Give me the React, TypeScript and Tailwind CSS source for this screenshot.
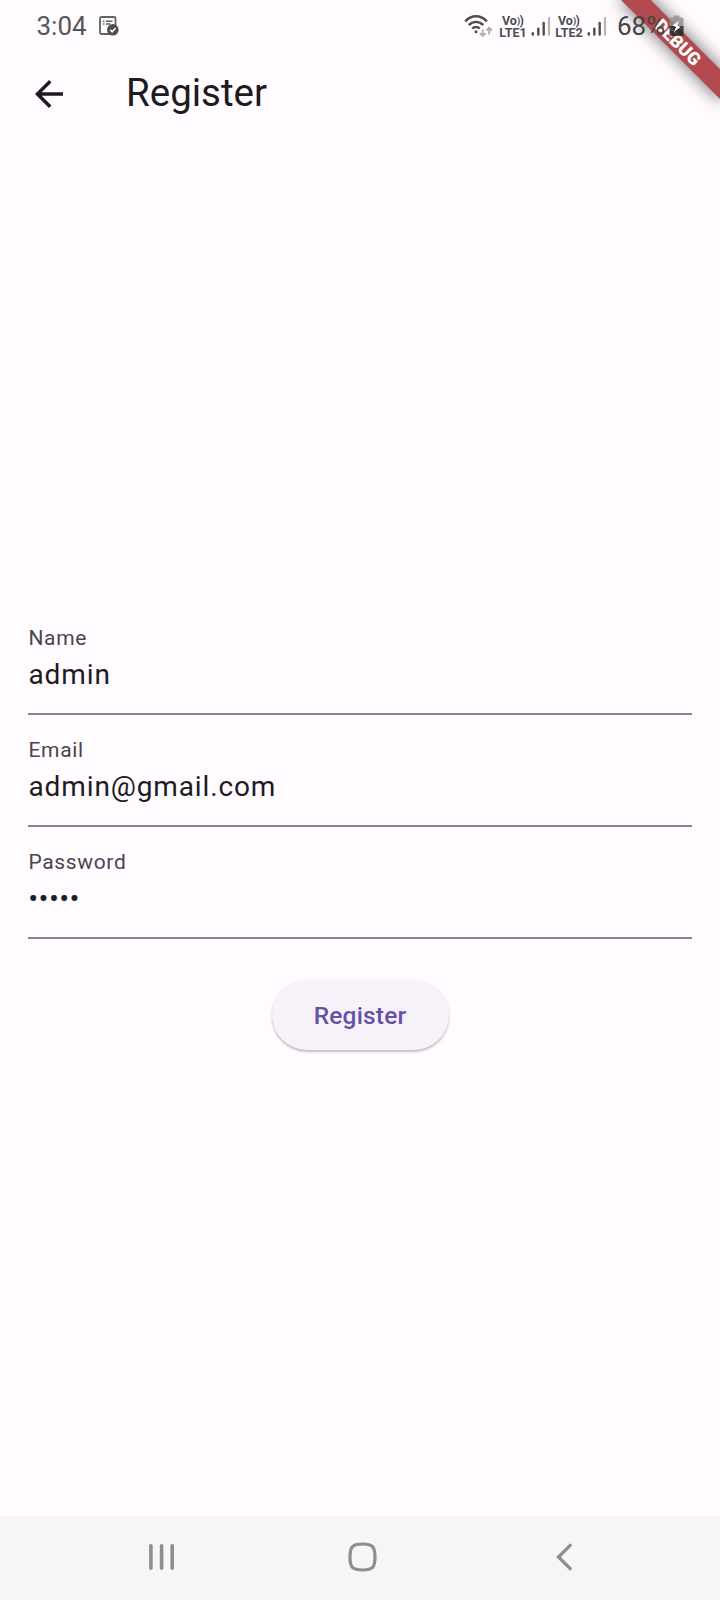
function Signal() {
  return (
    <svg width="20" height="22" viewBox="0 0 20 22" fill="none" strokeWidth="2.4" strokeLinecap="round">
      <path d="M1.8 18.2v1.4M7.3 13.6v6M12.7 8v11.6" stroke="#4d4d4f" />
      <path d="M18 3v16.6" stroke="#b9b7ba" />
    </svg>
  );
}

function Volte({ label }: { label: string }) {
  return (
    <div className="flex w-[28px] flex-col items-center text-[#4d4d4f]">
      <span className="flex h-[12px] items-center text-[12.5px] leading-[12px] font-bold">
        Vo<span className="text-[9px]">)</span><span className="-ml-[0.5px] text-[12.5px]">)</span>
      </span>
      <span className="flex h-[11px] items-center text-[12.5px] leading-[11px] font-bold">{label}</span>
    </div>
  );
}

function StatusBar() {
  return (
    <header className="relative z-20 flex h-[52px] items-center text-[26px] leading-[30px] text-[#565658]">
      <span className="ml-[36.5px] w-[51px]">3:04</span>
      <svg className="ml-[11.5px]" width="20" height="20" viewBox="0 0 20 20" fill="none">
        <rect x="1" y="1" width="15.5" height="17" rx="1.5" stroke="#626163" strokeWidth="1.8" />
        <path d="M4 5.2h1.5M7 5.2h6.5M4 8h1.5M7 8h4.5" stroke="#626163" strokeWidth="1.5" />
        <circle cx="13.8" cy="13.8" r="5.8" fill="#4d4d4f" />
        <path d="M11.2 13.8l1.9 2 3.5-3.7" stroke="#fff" strokeWidth="1.5" />
      </svg>
      <svg className="ml-[345px]" width="30" height="24" viewBox="0 0 30 24" fill="none">
        <g stroke="#4d4d4f" strokeWidth="2.4">
          <path d="M1.2 7.4C7.3.6 16.8.6 22.9 7.4" />
          <path d="M4.8 11.1c4.1-4.3 10.3-4.3 14.4 0" />
          <path d="M8.3 14.6c2.1-2.2 5.3-2.2 7.4 0" />
        </g>
        <circle cx="12" cy="17.8" r="1.5" fill="#4d4d4f" />
        <path d="M18.7 15.2v6.6M15.9 19.2l2.8 2.8 2.8-2.8M25.2 20.4v-6.6M22.4 16.6l2.8-2.8 2.8 2.8" stroke="#aaa8ac" strokeWidth="1.7" />
      </svg>
      <div className="ml-[5px]"><Volte label="LTE1" /></div>
      <div className="ml-[4px]"><Signal /></div>
      <div className="ml-[4px]"><Volte label="LTE2" /></div>
      <div className="ml-[4px]"><Signal /></div>
      <span className="ml-[10px] w-[49px] text-[#444446]">68%</span>
      <svg className="ml-[3px]" width="15" height="22" viewBox="0 0 15 22">
        <path d="M4.5.5h6v2h2.2Q14.5 2.5 14.5 4.5V11H.5V4.5q0-2 2-2h2z" fill="#8f8f8f" fillOpacity=".8" />
        <path d="M.5 11h14v8.5q0 1.5-1.5 1.5H2Q.5 21 .5 19.5z" fill="#222" fillOpacity=".82" />
        <path d="M10 6L3.5 10.5l3.6 1.6L5 17l6.5-5-3.4-1.4z" fill="#fff" />
      </svg>
    </header>
  );
}

function DebugBanner() {
  return (
    <div className="pointer-events-none absolute top-0 right-0 z-10 h-[140px] w-[140px] overflow-hidden">
      <div className="absolute top-[49px] left-[70px] flex h-[21px] w-[140px] origin-[70px_-49px] rotate-45 items-center justify-center bg-[#b24a4d] text-[17.85px] leading-none font-black text-white shadow-[0_0_18px_rgba(0,0,0,0.6)]">
        DEBUG
      </div>
    </div>
  );
}

function Field({ label, value, secret = false }: { label: string; value: string; secret?: boolean }) {
  return (
    <div className="flex h-[112px] flex-col border-b-2 border-[#8a8490] pt-[22px]">
      <span className="h-[26px] pl-[0.5px] text-[21px] leading-[26px] tracking-[0.64px] text-[#49454f]">{label}</span>
      <span
        className={
          secret
            ? "mt-[3px] pl-[0.5px] text-[28px] leading-[42px] tracking-[0.875px] text-[#1c1b1f] [-webkit-text-stroke:0.3px_#1c1b1f]"
            : "mt-[3px] pl-[0.5px] text-[28px] leading-[42px] tracking-[0.875px] text-[#1c1b1f]"
        }
      >
        {value}
      </span>
    </div>
  );
}

function NavigationBar() {
  return (
    <nav className="flex h-[84px] items-center bg-[#f6f6f6] pb-[3px]">
      <svg className="ml-[148px]" width="28" height="28" viewBox="0 0 28 28" fill="none" stroke="#8e8e8e" strokeWidth="3.6" strokeLinecap="round">
        <path d="M2.9 2.8v22.4M13.6 2.8v22.4M24.2 2.8v22.4" />
      </svg>
      <svg className="ml-[172px]" width="30" height="30" viewBox="0 0 30 30" fill="none" stroke="#8e8e8e" strokeWidth="3.2">
        <path d="M14.5 2C24.5 2 27 4.5 27 15S24.5 28 14.5 28 2 25.5 2 15 4.5 2 14.5 2z" />
      </svg>
      <svg className="ml-[177px]" width="18" height="30" viewBox="0 0 18 30" fill="none" stroke="#8e8e8e" strokeWidth="3.3" strokeLinecap="round">
        <path d="M15.2 3.3L3.5 15l11.7 11.7" />
      </svg>
    </nav>
  );
}

export default function App() {
  return (
    <div className="relative flex h-[1600px] w-[720px] flex-col overflow-hidden bg-[#fffbff] font-[Roboto,sans-serif]">
      <StatusBar />
      <DebugBanner />
      <div className="flex h-[84px] items-center">
        <svg className="ml-[28px]" width="42" height="42" viewBox="0 0 24 24" fill="#1c1b1f">
          <path d="M20 11H7.83l5.59-5.59L12 4l-8 8 8 8 1.41-1.41L7.83 13H20v-2z" />
        </svg>
        <h1 className="ml-[56px] pb-[4px] text-[38.5px] leading-[49px] font-normal text-[#1c1b1f]">Register</h1>
      </div>
      <main className="flex flex-1 flex-col px-[28px] pt-[467px]">
        <Field label="Name" value="admin" />
        <Field label="Email" value="admin@gmail.com" />
        <Field label="Password" value="•••••" secret />
        <button className="mt-[41px] h-[70px] w-[177px] self-center rounded-full bg-[#f7f2fa] pt-[2px] text-[24.5px] font-medium tracking-[0.175px] text-[#6750a4] shadow-[0_2px_2px_rgba(0,0,0,0.2),0_1px_4px_rgba(0,0,0,0.08)]">
          Register
        </button>
      </main>
      <NavigationBar />
    </div>
  );
}
